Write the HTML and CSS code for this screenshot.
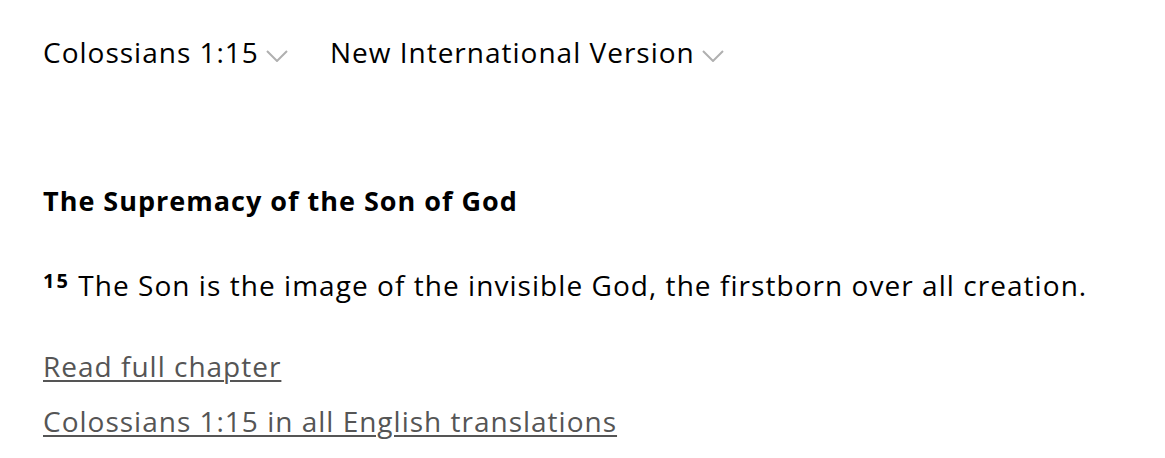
FILE: index.html
```html
<!DOCTYPE html>
<html lang="en">
<head>
<meta charset="utf-8">
<title>Colossians 1:15 NIV</title>
<link rel="stylesheet" href="styles.css">
</head>
<body>
<main class="page">
  <div class="selectors">
    <div class="selector">
      <span class="selector-label">Colossians 1:15</span>
      <svg class="chevron" width="22" height="12" viewBox="0 0 22 12"><polyline points="1,1 11,11 21,1" fill="none" stroke="#b0b0b0" stroke-width="2"/></svg>
    </div>
    <div class="selector">
      <span class="selector-label">New International Version</span>
      <svg class="chevron" width="22" height="12" viewBox="0 0 22 12"><polyline points="1,1 11,11 21,1" fill="none" stroke="#b0b0b0" stroke-width="2"/></svg>
    </div>
  </div>
  <h3 class="heading">The Supremacy of the Son of God</h3>
  <p class="verse"><sup class="verse-num">15</sup> The Son is the image of the invisible God, the firstborn over all creation.</p>
  <div class="links">
    <a class="link" href="#">Read full chapter</a>
    <a class="link" href="#">Colossians 1:15 in all English translations</a>
  </div>
</main>
</body>
</html>
```
FILE: styles.css
```css
html, body {
  margin: 0;
  padding: 0;
  background: #fff;
}
.page {
  padding: 32px 0 0 43px;
  font-family: "Open Sans", "Noto Sans", sans-serif;
  color: #000;
}
.selectors {
  display: flex;
  gap: 42px;
  height: 40px;
}
.selector {
  display: flex;
  align-items: flex-start;
}
.selector-label {
  font-size: 28px;
  line-height: 40px;
  letter-spacing: 1px;
  white-space: nowrap;
}
.chevron {
  margin-top: 18px;
  margin-left: 7px;
  flex: none;
}
.heading {
  margin: 111px 0 0;
  font-size: 27px;
  font-weight: 700;
  line-height: 36px;
  letter-spacing: 1px;
}
.verse {
  margin: 46px 0 0;
  font-size: 28px;
  line-height: 40px;
  letter-spacing: 1.05px;
  white-space: nowrap;
}
.verse-num {
  font-size: 20px;
  font-weight: 700;
  line-height: 0;
  vertical-align: 8px;
  letter-spacing: 2px;
}
.links {
  margin-top: 34px;
  display: flex;
  flex-direction: column;
  align-items: flex-start;
}
.link {
  font-size: 28px;
  line-height: 55px;
  letter-spacing: 1px;
  color: #555;
  text-decoration: underline;
  text-decoration-thickness: 2px;
  text-underline-offset: 3px;
  white-space: nowrap;
}
```
